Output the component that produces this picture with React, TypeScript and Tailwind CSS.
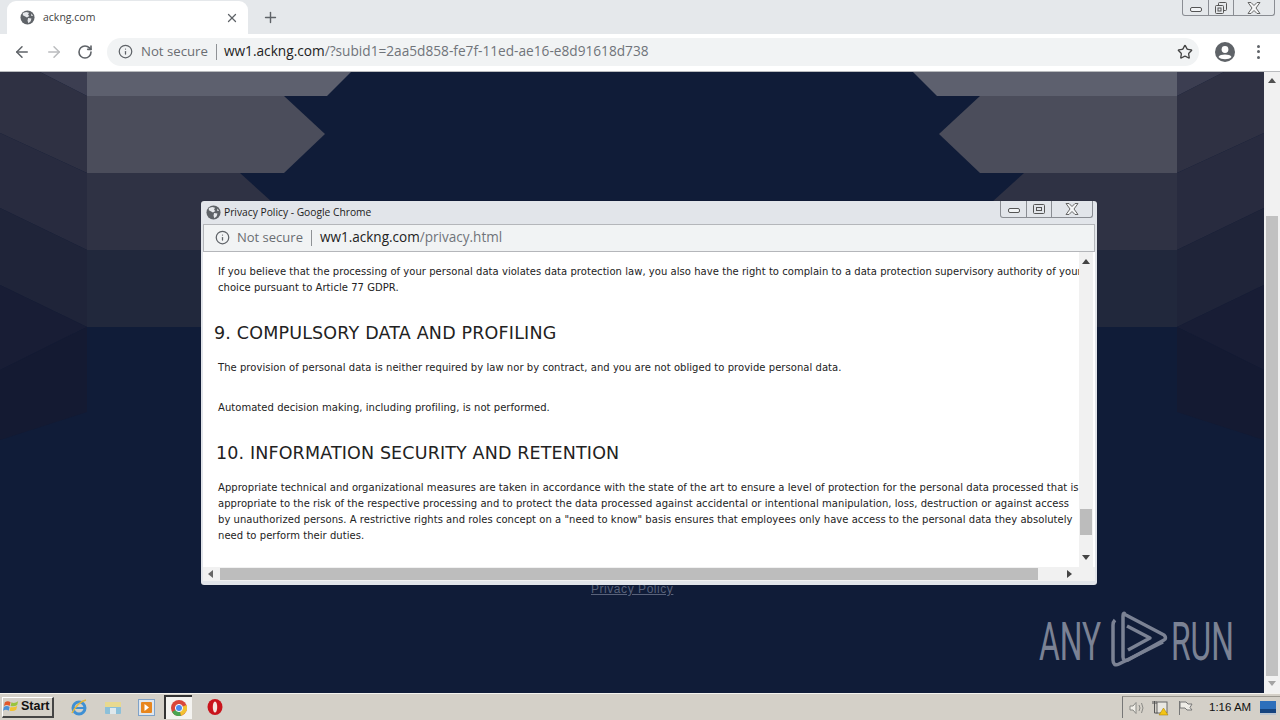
import { ArrowLeft, ArrowRight, RotateCw, Info, Star, X, Plus } from "lucide-react";

function Globe({ size, color = "#5f6368" }: { size: number; color?: string }) {
  return (
    <svg width={size} height={size} viewBox="0 0 16 16">
      <circle cx="8" cy="8" r="7.5" fill={color} />
      <path d="M3 3.2 L6.6 2.2 L9.6 3 L8.6 5 L10 6.4 L7.4 8 L5 6.6 L3 5.6Z M8.6 8.6 L12.2 9 L11.4 12 L9 14 L8 11.5Z M12 3.6 L14 6 L12 6.4Z" fill="#e6e8eb" />
    </svg>
  );
}

function WinControls({ restore, small }: { restore: boolean; small?: boolean }) {
  return (
    <div className={`flex items-stretch rounded-b-[3px] border border-t-0 border-[#8a8d93] ${small ? "h-[17px]" : "h-[16px]"}`}>
      <div className="flex w-[25px] items-center justify-center pt-[3px]">
        <div className="h-[5px] w-[12px] rounded-[2px] border border-[#555] bg-[#f2f4f6]" />
      </div>
      <div className="flex w-[25px] items-center justify-center border-l border-[#8a8d93]">
        <svg width="14" height="14" viewBox="0 0 14 14" fill="none" stroke="#555">
          {restore ? (
            <>
              <rect x="4.5" y="1.5" width="8" height="8" rx="1" />
              <rect x="1.5" y="4.5" width="8" height="8" rx="1" fill="#e6e9ec" />
              <rect x="4" y="7" width="3" height="3" />
            </>
          ) : (
            <>
              <rect x="1.5" y="2.5" width="11" height="9" rx="1" />
              <rect x="4.5" y="5.5" width="5" height="3" />
            </>
          )}
        </svg>
      </div>
      <div className="flex w-[41px] items-center justify-center border-l border-[#8a8d93]">
        <svg width="14" height="12" viewBox="0 0 14 12" fill="#f4f5f6" stroke="#666">
          <path d="M1 .5h3l3 3 3-3h3L9 6l4 5.500h-3L7 8.500l-3 3H1L5 6Z" />
        </svg>
      </div>
    </div>
  );
}

function Background() {
  const side = (
    <>
      <polygon points="0,0 87,0 87,24 40,0" fill="#3c3e51" />
      <polygon points="40,0 87,24 87,101 0,61 0,0" fill="#2f3143" />
      <polygon points="0,61 87,101 87,178 0,136" fill="#282b3f" />
      <polygon points="0,136 87,178 87,255 0,213" fill="#1f2439" />
      <polygon points="0,213 87,255 0,298" fill="#181d35" />
      <polygon points="0,298 87,255 87,340 0,368" fill="#141a32" />
      <polygon points="87,24 87,0 351,0 327,24" fill="#5d606e" />
      <polygon points="87,24 284,24 325,62 284,101 87,101" fill="#4b4d5b" />
      <polygon points="87,101 240,101 325,178 87,178" fill="#2f3244" />
      <polygon points="87,178 400,178 400,255 87,255" fill="#21283c" />
    </>
  );
  return (
    <svg className="absolute inset-0" width="1264" height="621" viewBox="0 0 1264 621">
      <rect width="1264" height="621" fill="#101c38" />
      {side}
      <g transform="translate(1264 0) scale(-1 1)">{side}</g>
    </svg>
  );
}

function Line({ children, top }: { children: string; top?: string }) {
  return <p className={`h-[16px] whitespace-nowrap text-[10px] leading-[16px] tracking-[0.045px] text-[#222] ${top ?? ""}`}>{children}</p>;
}

function Popup() {
  return (
    <div className="absolute left-[201px] top-[129px] flex h-[384px] w-[896px] flex-col rounded-[3px] bg-[#e2e5ea] px-[2px] pb-[4px] shadow-[0_0_1px_#0006]">
      <div className="flex h-[23px] shrink-0 items-start justify-between pl-[3px] pr-[2px]">
        <div className="flex h-[23px] items-center gap-[3px]">
          <Globe size={15} />
          <span className="font-['Open_Sans'] text-[10.250px] text-[#222]">Privacy Policy - Google Chrome</span>
        </div>
        <WinControls restore={false} small />
      </div>
      <div className="flex h-[28px] shrink-0 items-center border border-[#b4b6ba] bg-[#f1f3f4] pb-[1px] pl-[11px] font-['Open_Sans']">
        <Info size={15} color="#5f6368" strokeWidth={2} />
        <span className="ml-[7px] text-[13px] text-[#6a6d72]">Not secure</span>
        <span className="mx-[8px] h-[16px] w-px bg-[#8f9296]" />
        <span className="text-[13.550px] text-[#222]">ww1.ackng.com</span>
        <span className="text-[13.550px] text-[#70747a]">/privacy.html</span>
      </div>
      <div className="flex min-h-0 flex-1 bg-white">
        <div className="w-[876px] overflow-hidden pl-[15px] pt-[12px] font-['DejaVu_Sans']">
          <Line>If you believe that the processing of your personal data violates data protection law, you also have the right to complain to a data protection supervisory authority of your</Line>
          <Line>choice pursuant to Article 77 GDPR.</Line>
          <h2 className="-ml-[4px] mt-[25px] h-[24px] whitespace-nowrap text-[17.500px] leading-[24px] tracking-[0.18px] text-[#222]">9. COMPULSORY DATA AND PROFILING</h2>
          <Line top="mt-[15px]">The provision of personal data is neither required by law nor by contract, and you are not obliged to provide personal data.</Line>
          <Line top="mt-[24px]">Automated decision making, including profiling, is not performed.</Line>
          <h2 className="-ml-[2px] mt-[25px] h-[24px] whitespace-nowrap text-[17.500px] leading-[24px] tracking-[0.14px] text-[#222]">10. INFORMATION SECURITY AND RETENTION</h2>
          <Line top="mt-[15px]">Appropriate technical and organizational measures are taken in accordance with the state of the art to ensure a level of protection for the personal data processed that is</Line>
          <Line>appropriate to the risk of the respective processing and to protect the data processed against accidental or intentional manipulation, loss, destruction or against access</Line>
          <Line>by unauthorized persons. A restrictive rights and roles concept on a "need to know" basis ensures that employees only have access to the personal data they absolutely</Line>
          <Line>need to perform their duties.</Line>
        </div>
        <div className="flex w-[14px] flex-col items-center bg-[#f1f1f1] pt-[7px] text-[#444]">
          <div className="h-0 w-0 border-x-[4px] border-b-[5px] border-x-transparent border-b-[#444]" />
          <div className="mt-[245px] h-[26px] w-[12px] bg-[#bcbcbc]" />
          <div className="mt-[20px] h-0 w-0 border-x-[4px] border-t-[5px] border-x-transparent border-t-[#444]" />
        </div>
      </div>
      <div className="flex h-[14px] shrink-0 items-center bg-[#f1f1f1]">
        <div className="ml-[5px] h-0 w-0 border-y-[4px] border-r-[5px] border-y-transparent border-r-[#666]" />
        <div className="ml-[7px] h-[12px] w-[818px] bg-[#bdbdbd]" />
        <div className="ml-[29px] h-0 w-0 border-y-[4px] border-l-[5px] border-y-transparent border-l-[#444]" />
      </div>
    </div>
  );
}

function Watermark() {
  return (
    <div className="absolute left-[1039px] top-[539px] flex h-[62px] items-center text-[#7b8294]">
      <span className="w-[62px] origin-left scale-x-[0.6] font-['Roboto'] text-[53px] font-normal leading-none whitespace-nowrap">ANY</span>
      <svg className="ml-[9px] -mt-[2px]" width="60" height="62" viewBox="0 0 60 62" fill="none" stroke="#7b8294" strokeWidth="3.500" strokeLinejoin="round">
        <path d="M5 10 C3 12 3 13 3 15 V50 C3 54 5 56 9 54 L53 32" />
        <path d="M14 4 L54 25 C56 27 56 29 54 30 L18 50 C15 51 13 50 13 47 V6 C13 3 14 3 15 4" />
        <path d="M17 16 L40 28 L18 40" />
      </svg>
      <span className="ml-[1px] w-[62px] origin-left scale-x-[0.6] font-['Roboto'] text-[53px] font-normal leading-none whitespace-nowrap">RUN</span>
    </div>
  );
}

function Start() {
  return (
    <div className="ml-[2px] flex h-[21px] w-[52px] items-center gap-[1px] border border-b-2 border-r-2 border-[#fff] border-b-[#444] border-r-[#444] bg-[#d4d0c8]">
      <svg width="17" height="17" viewBox="0 0 18 17">
        <path d="M2 4 Q5 2 8 4 L7 8 Q4 6 1 8Z" fill="#e2582c" />
        <path d="M9 4 Q12 6 16 3 L15 7 Q12 9 8 8Z" fill="#9ac43c" />
        <path d="M1 9 Q4 7 7 9 L6 13 Q3 11 0 13Z" fill="#4b90d9" />
        <path d="M8 9 Q11 10 15 8 L14 12 Q11 14 7 13Z" fill="#f2c231" />
      </svg>
      <span className="font-['Liberation_Sans'] text-[12.500px] font-bold leading-none text-[#111]">Start</span>
    </div>
  );
}

function TaskIcons() {
  return (
    <div className="ml-[16px] flex h-full items-center">
      <svg width="18" height="18" viewBox="0 0 18 18">
        <circle cx="9" cy="10" r="6" fill="none" stroke="#3f90d4" strokeWidth="3" />
        <path d="M4 10h10" stroke="#3f90d4" strokeWidth="2" />
        <path d="M2 15 Q8 4 16 2" fill="none" stroke="#e5b73b" strokeWidth="1.500" />
      </svg>
      <svg width="18" height="17" viewBox="0 0 18 17" className="ml-[16px]">
        <rect x="1" y="3" width="16" height="12" rx="1" fill="#8cc0d9" />
        <rect x="1" y="3" width="16" height="5" fill="#e8d98f" />
        <rect x="6" y="9" width="6" height="6" fill="#dfe8ec" />
      </svg>
      <svg width="17" height="17" viewBox="0 0 17 17" className="ml-[16px]">
        <rect x=".5" y=".5" width="16" height="16" fill="#dfe6ee" stroke="#7fa2c8" />
        <rect x="3" y="3" width="11" height="11" rx="1" fill="#e8861e" />
        <path d="M6.500 5 L11 8.500 L6.500 12Z" fill="#fff" />
      </svg>
      <div className="ml-[9px] flex h-[24px] w-[28px] items-center justify-center border-l-2 border-t-2 border-[#333] border-r-[#fff] bg-[#f4f3f0]">
        <svg width="16" height="16" viewBox="0 0 16 16">
          <circle cx="8" cy="8" r="8" fill="#d9473a" />
          <path d="M8 8 L1 12 A8 8 0 0 0 10 15.700Z" fill="#4aa551" />
          <path d="M8 8 L15.500 5 A8 8 0 0 1 10 15.700Z" fill="#f2c230" />
          <circle cx="8" cy="8" r="3.600" fill="#4c8bf0" stroke="#fff" />
        </svg>
      </div>
      <svg width="16" height="18" viewBox="0 0 16 18" className="ml-[15px]">
        <ellipse cx="8" cy="9" rx="7.500" ry="8" fill="#c9141c" />
        <ellipse cx="8" cy="9" rx="2.200" ry="5.500" fill="#f4e6e0" />
      </svg>
    </div>
  );
}

function Tray() {
  return (
    <div className="ml-auto flex h-[22px] w-[158px] shrink-0 items-center border-l border-t border-l-[#777] border-t-[#9a978f] pl-[6px]">
      <svg width="16" height="14" viewBox="0 0 16 14" fill="none" stroke="#8a8a86">
        <path d="M1 5h3l3-3.500v11L4 9H1Z" fill="#f0eee8" />
        <path d="M10 4 Q12 7 10 10 M12.500 2 Q15.500 7 12.500 12" />
      </svg>
      <svg width="18" height="17" viewBox="0 0 18 17" className="ml-[7px]">
        <rect x="5" y="3" width="10" height="11" fill="#e9e7e1" stroke="#666" />
        <path d="M2.500 2v6 M1 2v3 M4 2v3 M2.500 8v6h3" stroke="#555" fill="none" />
        <path d="M11.500 9 L16 16 H7Z" fill="#f3c415" stroke="#a07a00" strokeWidth=".5" />
      </svg>
      <svg width="16" height="16" viewBox="0 0 16 16" fill="#efede7" stroke="#777" className="ml-[7px]">
        <path d="M2.500 1v14" />
        <path d="M3 2h6l2 2h4l-2 3.500L15 10h-5L8 8H3Z" />
      </svg>
      <span className="ml-[16px] shrink-0 whitespace-nowrap font-['Liberation_Sans'] text-[11.500px] text-[#111]">1:16 AM</span>
      <svg width="16" height="14" viewBox="0 0 16 14" className="ml-[9px] shrink-0">
        <rect width="16" height="12" fill="#2c6fbb" />
        <rect y="8" width="16" height="4" fill="#14437e" />
        <rect x="0" y="12" width="16" height="2" fill="#b9c4cf" />
      </svg>
    </div>
  );
}

export default function App() {
  return (
    <div className="flex h-[720px] w-[1280px] flex-col overflow-hidden bg-white font-['Open_Sans',sans-serif]">
      <div className="flex h-[34px] shrink-0 items-start bg-[#e5e8eb]">
        <div className="ml-[7px] mt-[1px] flex h-[33px] w-[241px] items-center rounded-t-[9px] bg-white pl-[13px] pr-[9px]">
          <Globe size={15} />
          <span className="ml-[8px] font-['Open_Sans'] text-[10.500px] text-[#444]">ackng.com</span>
          <X className="ml-auto" size={14} color="#5f6368" strokeWidth={2.200} />
        </div>
        <Plus className="ml-[14px] mt-[9px]" size={17} color="#5f6368" strokeWidth={2} />
        <div className="ml-auto mr-[5px]">
          <WinControls restore />
        </div>
      </div>

      <div className="flex h-[38px] shrink-0 items-center border-b border-[#b9bbbe] bg-white pb-[2px]">
        <ArrowLeft className="ml-[13px]" size={18} color="#5f6368" strokeWidth={2} />
        <ArrowRight className="ml-[14px]" size={18} color="#babcbe" strokeWidth={2} />
        <RotateCw className="ml-[14px]" size={16} color="#5f6368" strokeWidth={2.400} />
        <div className="ml-[14px] flex h-[28px] w-[1092px] items-center rounded-full bg-[#f1f3f4] pl-[11px] font-['Open_Sans']">
          <Info size={15} color="#5f6368" strokeWidth={2} />
          <span className="ml-[8px] text-[13.200px] text-[#6a6d72]">Not secure</span>
          <span className="ml-[8px] mr-[7px] h-[16px] w-px bg-[#8f9296]" />
          <span className="text-[13.680px] text-[#222]">ww1.ackng.com</span>
          <span className="text-[13.680px] text-[#70747a]">/?subid1=2aa5d858-fe7f-11ed-ae16-e8d91618d738</span>
          <Star className="ml-auto mr-[6px]" size={16} color="#444" strokeWidth={2} />
        </div>
        <svg className="ml-[16px]" width="20" height="20" viewBox="0 0 20 20">
          <circle cx="10" cy="10" r="10" fill="#5f6368" />
          <circle cx="10" cy="7.500" r="3.400" fill="#fff" />
          <path d="M3.500 15 C5 11.800 15 11.800 16.500 15 C14 18 6 18 3.500 15Z" fill="#fff" />
        </svg>
        <div className="ml-[22px] flex flex-col gap-[2.500px]">
          <span className="h-[3px] w-[3px] rounded-full bg-[#5f6368]" />
          <span className="h-[3px] w-[3px] rounded-full bg-[#5f6368]" />
          <span className="h-[3px] w-[3px] rounded-full bg-[#5f6368]" />
        </div>
      </div>

      <div className="flex h-[621px] shrink-0">
        <div className="relative w-[1264px] overflow-hidden">
          <Background />
          <a className="absolute left-[591px] top-[508px] font-['Liberation_Sans'] text-[12px] tracking-[0.55px] text-[#59627a] underline">Privacy Policy</a>
          <Popup />
          <Watermark />
        </div>
        <div className="flex w-[16px] flex-col items-center bg-[#f1f1f1] pt-[6px]">
          <div className="h-0 w-0 border-x-[4px] border-b-[5px] border-x-transparent border-b-[#505050]" />
          <div className="mt-[133px] h-[460px] w-[12px] bg-[#c1c1c1]" />
          <div className="mt-[5px] h-0 w-0 border-x-[4px] border-t-[5px] border-x-transparent border-t-[#a3a3a3]" />
        </div>
      </div>

      <div className="flex h-[27px] shrink-0 items-center border-t border-[#f4f3ef] bg-[#d4d0c8]">
        <Start />
        <TaskIcons />
        <Tray />
      </div>
    </div>
  );
}
